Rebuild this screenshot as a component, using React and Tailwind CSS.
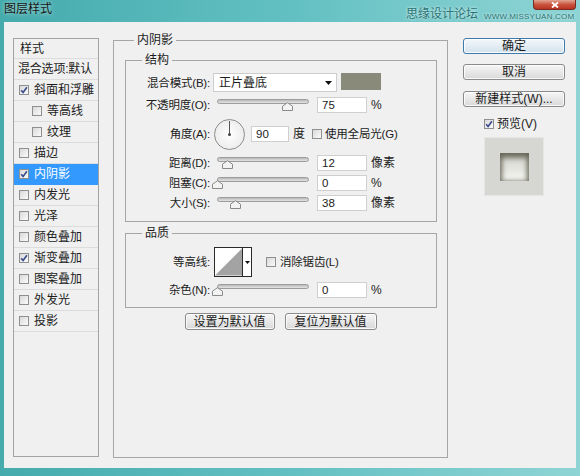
import React from "react";

const FONT = "font-['Liberation_Sans','Noto_Sans_CJK_SC',sans-serif]";

const styles = [
  { label: "斜面和浮雕", checked: true },
  { label: "等高线", indent: true },
  { label: "纹理", indent: true },
  { label: "描边" },
  { label: "内阴影", checked: true, active: true },
  { label: "内发光" },
  { label: "光泽" },
  { label: "颜色叠加" },
  { label: "渐变叠加", checked: true },
  { label: "图案叠加" },
  { label: "外发光" },
  { label: "投影" },
];

function Check({ checked }) {
  return (
    <span className="flex h-[10px] w-[10px] shrink-0 items-center justify-center border border-[#8e8f8f] bg-linear-to-br from-[#d9d9d9] to-[#fbfbfb]">
      {checked && (
        <svg viewBox="0 0 8 8" className="h-[8px] w-[8px]">
          <path d="M1.2 4.2 L3.1 6.4 L6.9 1.2" fill="none" stroke="#37498a" strokeWidth="1.6" />
        </svg>
      )}
    </span>
  );
}

function Slider({ pos }) {
  return (
    <div className="relative ml-[7px] h-[12px] w-[92px] shrink-0">
      <div className="h-[5px] w-full rounded-full border border-[#9c9c9c] bg-linear-to-b from-[#b9b9b9] to-[#e4e4e4]" />
      <svg className="absolute top-[3px]" style={{ left: pos - 5 }} width="11" height="9" viewBox="0 0 11 9">
        <path d="M0.5 8.5 V4.2 L5.5 0.7 L10.5 4.2 V8.5 Z" fill="#f3f3f3" stroke="#8a8a8a" />
      </svg>
    </div>
  );
}

function Field({ value, className = "ml-[8px] w-[50px]" }) {
  return (
    <div className={`flex h-[16px] shrink-0 items-center border border-[#cfcfcf] bg-white pl-[4px] text-[11.5px] leading-[14px] ${className}`}>
      {value}
    </div>
  );
}

function Label({ children }) {
  return <div className="w-[84px] shrink-0 text-right text-[11.5px] leading-[14px] tracking-[-0.2px]">{children}</div>;
}

function SliderRow({ label, pos, value, unit }) {
  return (
    <div className="flex h-[20px] items-center">
      <Label>{label}</Label>
      <Slider pos={pos} />
      <Field value={value} />
      <span className="ml-[4px] text-[12px] leading-[14px]">{unit}</span>
    </div>
  );
}

function Button({ children, focus, className = "" }) {
  return (
    <button
      type="button"
      className={`flex shrink-0 items-center justify-center rounded-[3px] border text-[12px] leading-[14px] text-[#1a1a1a] shadow-[inset_0_0_0_1px_rgba(255,255,255,0.8)] ${
        focus
          ? "border-[#3d7bad] bg-linear-to-b from-[#f4f8fb] to-[#d3e2ec]"
          : "border-[#8a8a8a] bg-linear-to-b from-[#f6f6f6] to-[#d9d9d9]"
      } ${className}`}
    >
      {children}
    </button>
  );
}

export default function App() {
  return (
    <div className={`relative flex h-[476px] w-[580px] flex-col overflow-hidden bg-linear-to-r from-[#45abad] via-[#62c0c2] to-[#8fd4d5] text-[#1c1c1c] ${FONT}`}>
      {/* title bar */}
      <div className="flex h-[22px] shrink-0 items-start justify-between">
        <span className="ml-[4px] mt-[3px] text-[12px] leading-[13px] text-[#151515] [text-shadow:0_0_4px_rgba(255,255,255,0.7)]">
          图层样式
        </span>
        <div className="mr-[4px] flex h-[10px] w-[43px] items-center justify-center rounded-b-[4px] border border-t-0 border-[#7a2a20] bg-linear-to-b from-[#e0a593] via-[#c9533e] to-[#b8341f]">
          <svg width="8" height="6" viewBox="0 0 8 6">
            <path d="M1 0.5 L7 5.5 M7 0.5 L1 5.5" stroke="white" strokeWidth="1.8" />
          </svg>
        </div>
      </div>
      <div className="absolute left-[406px] top-[8px] flex items-end gap-[6px] text-[#2b7475] [text-shadow:0_0_3px_rgba(255,255,255,0.9)]">
        <span className="text-[12px] leading-[13px]">思缘设计论坛</span>
        <span className="text-[8px] leading-[9px] tracking-[0.2px]">WWW.MISSYUAN.COM</span>
      </div>

      {/* client */}
      <div className="mx-[4px] mb-[8px] flex flex-1 items-start bg-[#f0f0f0]">
        {/* style list */}
        <div className="ml-[9px] mt-[16px] h-[419px] w-[86px] shrink-0 border border-[#a3a3a3] bg-[#f0f0f0]">
          <div className="flex h-[20px] items-center border-b border-[#dcdcdc] pl-[6px] text-[12px] leading-[14px]">样式</div>
          <div className="flex h-[21px] items-center border-b border-[#dcdcdc] pl-[4px] text-[12px] leading-[14px] tracking-[-0.2px]">混合选项:默认</div>
          {styles.map((s) => (
            <div
              key={s.label}
              className={`flex h-[21px] items-center gap-[5px] border-b text-[12px] leading-[14px] ${s.indent ? "pl-[18px]" : "pl-[5px]"} ${
                s.active ? "border-[#3399ff] bg-[#3399ff] text-white" : "border-[#dcdcdc]"
              }`}
            >
              <Check checked={s.checked} />
              <span>{s.label}</span>
            </div>
          ))}
        </div>

        {/* inner shadow settings */}
        <fieldset className="ml-[14px] mt-[11px] h-[425px] w-[335px] shrink-0 border border-[#a6a6a6]">
          <legend className="ml-[20px] px-[3px] text-[12px] leading-[14px]">内阴影</legend>

          <fieldset className="ml-[11px] mt-[6px] h-[169px] w-[312px] border border-[#a6a6a6]">
            <legend className="ml-[16px] px-[3px] text-[12px] leading-[14px]">结构</legend>

            <div className="mt-[6px] flex h-[20px] items-start">
              <div className="flex h-[20px] items-center">
                <Label>混合模式(B):</Label>
              </div>
              <div className="ml-[3px] flex h-[19px] w-[124px] items-center justify-between border border-[#cdcdcd] bg-white pl-[5px] pr-[4px] text-[12px] leading-[14px]">
                <span>正片叠底</span>
                <svg width="7" height="4" viewBox="0 0 7 4">
                  <path d="M0 0 H7 L3.5 4 Z" fill="#111" />
                </svg>
              </div>
              <div className="ml-[4px] h-[17px] w-[40px] bg-[#8a8a7a]" />
            </div>

            <div className="mt-[2px]">
              <SliderRow label="不透明度(O):" pos={70} value="75" unit="%" />
            </div>

            <div className="flex h-[38px] items-center">
              <Label>角度(A):</Label>
              <div className="relative ml-[4px] h-[31px] w-[31px] shrink-0 rounded-full border border-[#8d8d8d] bg-radial from-white to-[#e6e6e6]">
                <div className="absolute left-[14px] top-[1px] h-[14px] w-[1px] bg-[#555]" />
                <div className="absolute left-[13px] top-[13px] h-[3px] w-[3px] rounded-full bg-[#444]" />
              </div>
              <Field value="90" className="ml-[6px] w-[38px]" />
              <span className="ml-[4px] text-[12px] leading-[14px]">度</span>
              <span className="ml-[7px]">
                <Check />
              </span>
              <span className="ml-[3px] text-[11.5px] leading-[14px] tracking-[-0.2px]">使用全局光(G)</span>
            </div>

            <SliderRow label="距离(D):" pos={10} value="12" unit="像素" />
            <SliderRow label="阻塞(C):" pos={0} value="0" unit="%" />
            <SliderRow label="大小(S):" pos={18} value="38" unit="像素" />
          </fieldset>

          <fieldset className="ml-[11px] mt-[4px] h-[82px] w-[312px] border border-[#a6a6a6]">
            <legend className="ml-[16px] px-[3px] text-[12px] leading-[14px]">品质</legend>

            <div className="mt-[7px] flex h-[30px] items-center">
              <Label>等高线:</Label>
              <div className="ml-[4px] flex h-[30px] w-[38px] shrink-0 border border-[#2a2a2a] bg-white">
                <svg width="28" height="28" viewBox="0 0 28 28" className="border-r border-[#2a2a2a]">
                  <path d="M0 28 L28 0 V28 Z" fill="#a3a3a3" />
                </svg>
                <div className="flex flex-1 items-center justify-center">
                  <svg width="5" height="3" viewBox="0 0 5 3">
                    <path d="M0 0 H5 L2.5 3 Z" fill="#111" />
                  </svg>
                </div>
              </div>
              <span className="ml-[14px]">
                <Check />
              </span>
              <span className="ml-[4px] text-[11.5px] leading-[14px] tracking-[-0.2px]">消除锯齿(L)</span>
            </div>

            <div className="mt-[3px]">
              <SliderRow label="杂色(N):" pos={0} value="0" unit="%" />
            </div>
          </fieldset>

          <div className="mt-[5px] flex justify-center gap-[10px]">
            <Button className="h-[17px] w-[90px]">设置为默认值</Button>
            <Button className="h-[17px] w-[92px]">复位为默认值</Button>
          </div>
        </fieldset>

        {/* buttons + preview */}
        <div className="ml-[15px] mt-[16px] flex w-[102px] shrink-0 flex-col">
          <Button focus className="h-[16px] w-[102px]">确定</Button>
          <Button className="mt-[10px] h-[16px] w-[102px]">取消</Button>
          <Button className="mt-[11px] h-[16px] w-[102px]">新建样式(W)...</Button>
          <div className="ml-[21px] mt-[10px] flex items-center gap-[3px]">
            <Check checked />
            <span className="text-[12px] leading-[14px]">预览(V)</span>
          </div>
          <div className="ml-[21px] mt-[6px] flex h-[59px] w-[60px] items-center justify-center border border-[#e6e6e4] bg-[#d6d6d3]">
            <div className="h-[28px] w-[29px] bg-linear-to-b from-[#cfcfc8] to-[#f7f7f3] shadow-[inset_0_5px_5px_rgba(95,95,80,0.8),inset_3px_0_4px_rgba(95,95,80,0.5),inset_-3px_0_4px_rgba(95,95,80,0.5)]" />
          </div>
        </div>
      </div>
    </div>
  );
}
